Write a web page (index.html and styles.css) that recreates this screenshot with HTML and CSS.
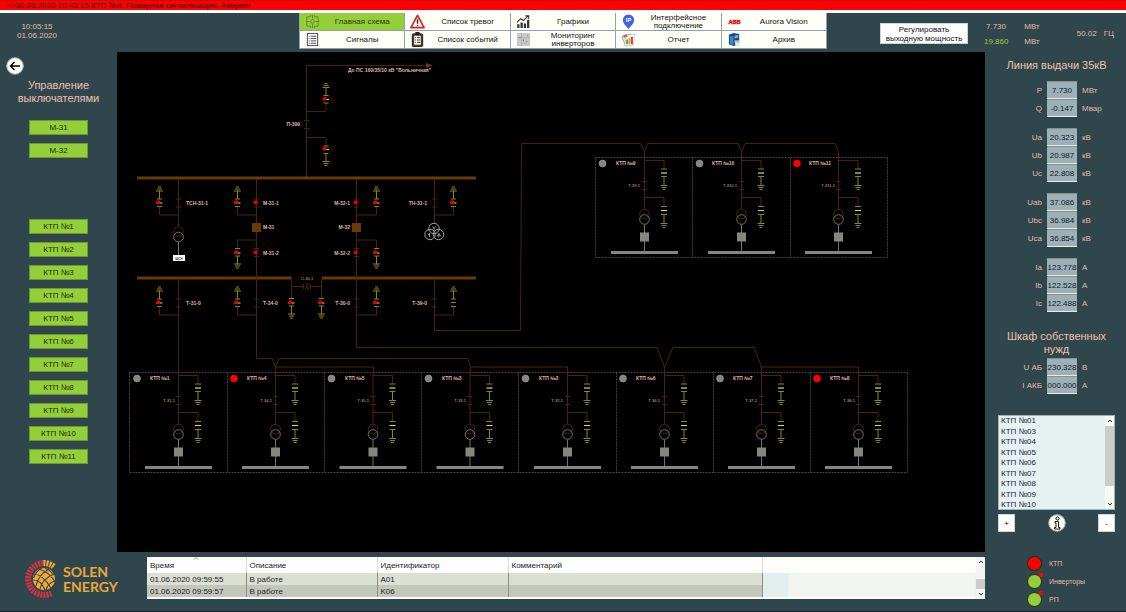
FILE: index.html
```html
<!DOCTYPE html>
<html lang="ru">
<head>
<meta charset="utf-8">
<title>Solen Energy</title>
<link rel="stylesheet" href="styles.css">
</head>
<body>
<div class="app">
  <div class="alarm" role="alert">&gt;&gt;30.05.2020 20:43:15 КТП №4. Пожарная сигнализация. Авария!</div>

  <header class="top">
    <div class="clock"><time>10:05:15</time><time>01.06.2020</time></div>
    <nav class="nav">
      <button class="nav-item active"><svg class="icon" viewBox="0 0 16 16"><path d="M1 8h4M11 8h4M8 1v4M8 11v4M2 3h4v-2M14 3h-4v-2M2 13h4v2M14 13h-4v2M2 3v10M14 3v10" fill="none" stroke="#5d8a2c"/><circle cx="8" cy="8" r="2" fill="#94cf3a" stroke="#5d8a2c"/></svg><span>Главная схема</span></button>
      <button class="nav-item"><svg class="icon" viewBox="0 0 16 16"><path d="M8 1.500L15 14.500H1Z" fill="#fff" stroke="#e0201c" stroke-width="1.800" stroke-linejoin="round"/><path d="M8 5.500v5M8 11.500v1.500" stroke="#222" stroke-width="1.500"/></svg><span>Список тревог</span></button>
      <button class="nav-item"><svg class="icon" viewBox="0 0 16 16"><path d="M2.500 11v4M6 9v6M9.500 10v5M13 6v9" stroke="#333" stroke-width="2.400"/><path d="M1 9l4-4 3 2 5-5M10 2h3.500v3" fill="none" stroke="#333" stroke-width="1.200"/></svg><span>Графики</span></button>
      <button class="nav-item"><svg class="icon" viewBox="0 0 16 16"><path d="M8 16C5 12.500 2 10 2 6.500A6 6 0 0 1 14 6.500C14 10 11 12.500 8 16Z" fill="#3f66dc"/><text x="8" y="9" class="pin-text">IP</text></svg><span>Интерфейсное подключение</span></button>
      <button class="nav-item"><svg class="icon" viewBox="0 0 16 16"><text x="8" y="11" class="abb-text">ABB</text></svg><span>Aurora Vision</span></button>
      <button class="nav-item"><svg class="icon" viewBox="0 0 16 16"><rect x="2.500" y="1.500" width="11" height="13" fill="#fff" stroke="#444"/><path d="M6 4.500h6M6 7h6M6 9.500h6M6 12h6" stroke="#444"/><path d="M4 4.500h1M4 7h1M4 9.500h1M4 12h1" stroke="#444"/></svg><span>Сигналы</span></button>
      <button class="nav-item"><svg class="icon" viewBox="0 0 16 16"><rect x="2.500" y="2" width="11" height="13.500" rx="1" fill="#5a3a1c" stroke="#1c1410"/><rect x="4.500" y="4" width="7" height="9.500" fill="#fff"/><rect x="5.500" y="0" width="5" height="3.500" rx="1" fill="#222"/><path d="M5.500 6h1M7.500 6h3.500M5.500 8.500h1M7.500 8.500h3.500M5.500 11h1M7.500 11h3.500" stroke="#222"/></svg><span>Список событий</span></button>
      <button class="nav-item"><svg class="icon" viewBox="0 0 16 16"><rect x="1" y="1" width="14" height="14" fill="#c8c8c8"/><path d="M1 6h14M6 1v14" stroke="#b4b4b4"/><path d="M3 6h2M8 8v2M11 10h1M9 12h1M12 4h1" stroke="#777"/></svg><span>Мониторинг инверторов</span></button>
      <button class="nav-item"><svg class="icon" viewBox="0 0 16 16"><path d="M1 5l9-3 3 10-8 3z" fill="#e8eef4" stroke="#9ab"/><path d="M5 4l10-2-2 12-9 1z" fill="#f6f8fa" stroke="#aab4bc" stroke-width=".6"/><path d="M2 4l4-2 1 3-4 1z" fill="#e2574c"/><path d="M6.500 8v5" stroke="#4ba64b" stroke-width="2"/><path d="M9 6.500v6.500" stroke="#f0a020" stroke-width="2"/><path d="M11.700 5v8" stroke="#e0402c" stroke-width="2"/></svg><span>Отчет</span></button>
      <button class="nav-item"><svg class="icon" viewBox="0 0 16 16"><path d="M2 3l5-2 6 1v11l-6 2-5-2z" fill="#174a7c"/><path d="M3 4l4 1v9l-4-1.500z" fill="#3e86c4"/><path d="M8 4l4-1v3l-4 1z" fill="#68b0e4"/><path d="M8 9h6v5l-5 1z" fill="#dce8f0"/><path d="M9 10.500h4" stroke="#e8a33a"/></svg><span>Архив</span></button>
    </nav>
    <div class="summary">
      <button class="regulate">Регулировать выходную мощность</button>
      <dl class="power"><dt>7.730</dt><dd>МВт</dd><dt class="green">19.860</dt><dd>МВт</dd></dl>
      <div class="freq"><span>50.02</span><span>ГЦ</span></div>
    </div>
  </header>

  <aside class="left">
    <button class="back" aria-label="Назад"><svg viewBox="0 0 18 18"><circle cx="9" cy="9" r="8.300" fill="#fffff6" stroke="#9fb0b3"/><path d="M14 9H4.500M8.500 5L4.500 9l4 4" fill="none" stroke="#000" stroke-width="1.400"/></svg></button>
    <h2>Управление выключателями</h2>
    <div class="switches">
      <button class="green-btn">М-31</button><button class="green-btn">М-32</button>
    </div>
    <div class="stations">
      <button class="green-btn">КТП №1</button><button class="green-btn">КТП №2</button><button class="green-btn">КТП №3</button><button class="green-btn">КТП №4</button><button class="green-btn">КТП №5</button><button class="green-btn">КТП №6</button><button class="green-btn">КТП №7</button><button class="green-btn">КТП №8</button><button class="green-btn">КТП №9</button><button class="green-btn">КТП №10</button><button class="green-btn">КТП №11</button>
    </div>
  </aside>

  <main class="scheme">
    <svg viewBox="117 52 868 500" role="img" aria-label="Главная схема">
      <defs>
        <g id="gnd">
          <path d="M0 4V12.500" class="wire"/>
          <path d="M0-12V-3.500M-3.500-11.500H3.500M-2.500-13.500H2.500M-1.500-15.500H1.500M-2.500-3.500H2.500M-2.500 4H2.500" class="yellow"/>
        </g>
        <g id="knife"><path d="M0 .5H3" class="bright"/><path d="M-3.500 1.500V-.5L-2-2H.5V1.500Z" class="red"/></g>
        <path id="tick" d="M-2.500-4H2.500M-2.500 4H2.500" class="wire"/>
        <g id="cell">
          <path d="M0 0V51.500M0 3H19.500V11.500M0 40H19.500V49M-2.500 24H2.500M-2.500 32H2.500" class="wire"/>
          <circle cx="0" cy="56.500" r="4.800" class="wire"/>
          <circle cx="0" cy="62" r="4.800" class="gray"/>
          <path d="M0 67V94" class="gray"/>
          <rect x="-4.500" y="75" width="9" height="9" class="gray-fill"/>
          <rect x="-33.500" y="93.500" width="67" height="3" class="gray-fill"/>
          <path d="M16.500 11.500H22.500M16.500 19H22.500M19.500 19V28M16 28H23M17 30H22M18 32H21M16.500 49H22.500M16.500 57H22.500M19.500 57V66M16 66H23M17 68H22M18 70H21" class="yellow"/>
          <path d="M16.500 15.500H22.500" class="yellow thick"/>
          <path d="M16.500 53H22.500" class="bright"/>
        </g>
      </defs>

      <!-- outgoing line -->
      <path d="M306.500 178V65.500H428M306.500 111.500H326M306.500 137.500H326" class="wire"/>
      <path d="M426 63L433 65.500L426 68Z" class="bus"/>
      <use href="#tick" x="306.500" y="124.500"/>
      <use href="#gnd" x="326" y="99"/><use href="#knife" x="326" y="99"/>
      <use href="#gnd" transform="translate(326 150) scale(1 -1)"/><use href="#knife" x="326" y="149"/>
      <text x="348" y="72">До ПС 160/35/10 кВ "Больничная"</text>
      <text x="300" y="126" class="end">П-399</text>

      <!-- bus bars -->
      <path d="M137 176.500H476V179.500H137ZM137 276.500H291.500V279.500H137ZM322 276.500H476V279.500H322Z" class="bus"/>

      <!-- feeders -->
      <path d="M178.500 179V226M256.500 179V358.500H272L275.500 367L279 358.500H467.500L470.500 367H567.500V373M275.500 373V367H373.500V373M470.500 367V373" class="wire"/>
      <path d="M356.500 179V347.500H657L664.500 367L673 347.500H754L761.500 367H858.500V373M664.500 367V373M761.500 367V373" class="wire"/>
      <path d="M434.500 179V223M434.500 279V330.500H520.500L521.500 143.500H640.500L644.500 152L647.500 143.500H738L741.500 152L745 143.500H835L838.500 152V158M644.500 152V158M741.500 152V158M178.500 279V373" class="wire"/>
      <path d="M159.500 215H178.500M237.500 215H256.500M356.500 215H376.500M434.500 215H453.500M237.500 240H256.500M356.500 240H376.500M159.500 315H178.500M237.500 315H256.500M356.500 315H376.500M434.500 315H453.500" class="wire"/>
      <path d="M291.500 279V290M321.500 279V290M291.500 286.500H303.500M310.500 286.500H321.500M303.500 284V289M310.500 284V289M306 283V290M308 283V290" class="wire"/>

      <use href="#gnd" x="159.500" y="202.500"/><use href="#gnd" x="237.500" y="202.500"/><use href="#gnd" x="376.500" y="202.500"/><use href="#gnd" x="453.500" y="202.500"/>
      <use href="#gnd" x="159.500" y="302.500"/><use href="#gnd" x="237.500" y="302.500"/><use href="#gnd" x="376.500" y="302.500"/><use href="#gnd" x="453.500" y="302.500"/>
      <use href="#gnd" transform="translate(237.500 252.500) scale(1 -1)"/><use href="#gnd" transform="translate(376.500 252.500) scale(1 -1)"/>
      <use href="#gnd" transform="translate(291.500 302.500) scale(1 -1)"/><use href="#gnd" transform="translate(321.500 302.500) scale(1 -1)"/>
      <use href="#knife" x="159.500" y="202.500"/><use href="#knife" x="237.500" y="202.500"/><use href="#knife" x="376.500" y="202.500"/><use href="#knife" x="453.500" y="202.500"/>
      <use href="#knife" x="237.500" y="252.500"/><use href="#knife" x="376.500" y="252.500"/>
      <use href="#knife" x="159.500" y="302.500"/><use href="#knife" x="237.500" y="302.500"/><use href="#knife" x="376.500" y="302.500"/><use href="#knife" x="291.500" y="302.500"/><use href="#knife" x="321.500" y="302.500"/>
      <path d="M451 302.500H456" class="yellow"/>
      <use href="#tick" x="178.500" y="203"/><use href="#tick" x="256.500" y="203"/><use href="#tick" x="356.500" y="203"/><use href="#tick" x="434.500" y="203"/>
      <use href="#tick" x="256.500" y="252.500"/><use href="#tick" x="356.500" y="252.500"/>
      <use href="#tick" x="178.500" y="303"/><use href="#tick" x="256.500" y="303"/><use href="#tick" x="356.500" y="303"/><use href="#tick" x="434.500" y="303"/>
      <path d="M253.500 204V202L255 200.500H257.500V204ZM353.500 204V202L355 200.500H357.500V204ZM253.500 254V252L255 250.500H257.500V254ZM353.500 254V252L355 250.500H357.500V254Z" class="red"/>
      <path d="M252 223H261V232H252ZM352 223H361V232H352Z" class="bus"/>

      <!-- auxiliary and voltage transformers -->
      <circle cx="178.500" cy="231.500" r="4.800" class="wire"/><circle cx="178.500" cy="237" r="4.800" class="gray"/>
      <path d="M178.500 242V255" class="gray"/><rect x="173" y="255" width="12" height="6" fill="#fff"/>
      <text x="179" y="260" class="aux">ЩСН</text>
      <g class="vt"><circle cx="434" cy="228.500" r="5.200"/><circle cx="430" cy="234.500" r="5.200"/><circle cx="438.500" cy="234.500" r="5.200"/><path d="M432.500 226.500L434 228.500L435.500 226.500M434 228.500V230.500M428 234L429.500 235M429.500 233V237M437.500 236H440.500L439 233.500Z"/></g>

      <text x="186" y="205">ТСН-31-1</text><text x="263" y="205">М-31-1</text><text x="350" y="205" class="end">М-32-1</text><text x="427" y="205" class="end">ТН-31-1</text>
      <text x="263" y="229">М-31</text><text x="350" y="229" class="end">М-32</text>
      <text x="263" y="255">М-31-2</text><text x="350" y="255" class="end">М-32-2</text>
      <text x="186" y="305">Т-31-0</text><text x="263" y="305">Т-34-0</text><text x="350" y="305" class="end">Т-30-0</text><text x="427" y="305" class="end">Т-39-0</text>
      <text x="301" y="280" class="small">С-30-1</text>

      <!-- upper transformer stations -->
      <path d="M595.500 157.500H887.500M595.500 257.500H887.500M595.500 157.500V257.500M692.500 157.500V257.500M790.500 157.500V257.500M887.500 157.500V257.500" class="frame"/>
      <use href="#cell" x="644.500" y="157.500"/><use href="#cell" x="741.500" y="157.500"/><use href="#cell" x="838.500" y="157.500"/>
      <circle cx="602.500" cy="163.500" r="3.500" class="lamp"/><circle cx="699.500" cy="163.500" r="3.500" class="lamp"/><circle cx="797" cy="163.500" r="3.500" class="lamp alarm-lamp"/>
      <text x="616" y="165">КТП №9</text><text x="712" y="165">КТП №10</text><text x="809" y="165">КТП №11</text>
      <text x="640" y="187" class="small end">Т-39-1</text><text x="737" y="187" class="small end">Т-310-1</text><text x="835" y="187" class="small end">Т-311-1</text>

      <!-- lower transformer stations -->
      <path d="M129.500 372.500H907.500M129.500 472.500H907.500M129.500 372.500V472.500M227.500 372.500V472.500M324.500 372.500V472.500M421.500 372.500V472.500M518.500 372.500V472.500M616.500 372.500V472.500M713.500 372.500V472.500M810.500 372.500V472.500M907.500 372.500V472.500" class="frame"/>
      <use href="#cell" x="178.500" y="372.500"/><use href="#cell" x="275.500" y="372.500"/><use href="#cell" x="373" y="372.500"/><use href="#cell" x="470" y="372.500"/><use href="#cell" x="567.500" y="372.500"/><use href="#cell" x="664.500" y="372.500"/><use href="#cell" x="761.500" y="372.500"/><use href="#cell" x="858.500" y="372.500"/>
      <circle cx="137" cy="378.500" r="3.500" class="lamp"/><circle cx="234" cy="378.500" r="3.500" class="lamp alarm-lamp"/><circle cx="331.500" cy="378.500" r="3.500" class="lamp"/><circle cx="428.500" cy="378.500" r="3.500" class="lamp"/><circle cx="525.500" cy="378.500" r="3.500" class="lamp"/><circle cx="623" cy="378.500" r="3.500" class="lamp"/><circle cx="720" cy="378.500" r="3.500" class="lamp"/><circle cx="817" cy="378.500" r="3.500" class="lamp alarm-lamp"/>
      <text x="150" y="380">КТП №1</text><text x="247" y="380">КТП №4</text><text x="345" y="380">КТП №5</text><text x="442" y="380">КТП №3</text><text x="539" y="380">КТП №2</text><text x="636" y="380">КТП №6</text><text x="733" y="380">КТП №7</text><text x="830" y="380">КТП №8</text>
      <text x="175" y="402" class="small end">Т-31-1</text><text x="272" y="402" class="small end">Т-34-1</text><text x="369" y="402" class="small end">Т-35-1</text><text x="466" y="402" class="small end">Т-33-1</text><text x="563" y="402" class="small end">Т-32-1</text><text x="660" y="402" class="small end">Т-36-1</text><text x="757" y="402" class="small end">Т-37-1</text><text x="855" y="402" class="small end">Т-38-1</text>
    </svg>
  </main>

  <aside class="right">
    <h2>Линия выдачи 35кВ</h2>
    <div class="readings">
      <div class="group">
        <label for="p">P</label><input id="p" value="7.730" readonly><span>МВт</span>
        <label for="q">Q</label><input id="q" value="-0.147" readonly><span>Мвар</span>
      </div>
      <div class="group">
        <label for="ua">Ua</label><input id="ua" value="20.323" readonly><span>кВ</span>
        <label for="ub">Ub</label><input id="ub" value="20.987" readonly><span>кВ</span>
        <label for="uc">Uc</label><input id="uc" value="22.808" readonly><span>кВ</span>
      </div>
      <div class="group">
        <label for="uab">Uab</label><input id="uab" value="37.086" readonly><span>кВ</span>
        <label for="ubc">Ubc</label><input id="ubc" value="36.984" readonly><span>кВ</span>
        <label for="uca">Uca</label><input id="uca" value="36.854" readonly><span>кВ</span>
      </div>
      <div class="group">
        <label for="ia">Ia</label><input id="ia" value="123.778" readonly><span>А</span>
        <label for="ib">Ib</label><input id="ib" value="122.528" readonly><span>А</span>
        <label for="ic">Ic</label><input id="ic" value="122.488" readonly><span>А</span>
      </div>
    </div>
    <h2 class="second">Шкаф собственных нужд</h2>
    <div class="group">
      <label for="uakb">U АБ</label><input id="uakb" value="230.328" readonly><span>В</span>
      <label for="iakb">I АКБ</label><input id="iakb" value="000.000" readonly><span>А</span>
    </div>
    <div class="list">
      <select size="9" aria-label="Список КТП">
        <option>КТП №01</option><option>КТП №03</option><option>КТП №04</option><option>КТП №05</option><option>КТП №06</option><option>КТП №07</option><option>КТП №08</option><option>КТП №09</option><option>КТП №10</option>
      </select>
      <div class="scroll"><svg viewBox="0 0 8 8"><path d="M2 5l2-2 2 2"/></svg><i class="thumb"></i><svg viewBox="0 0 8 8"><path d="M2 3l2 2 2-2"/></svg></div>
    </div>
    <div class="list-actions">
      <button class="square">+</button>
      <button class="info" aria-label="Информация"><svg viewBox="0 0 18 18"><circle cx="9" cy="9" r="8.300" fill="#fffff6" stroke="#9fb0b3"/><circle cx="9.500" cy="4.500" r="1.600" fill="#fff" stroke="#000"/><path d="M7 7.500h3.500v6H12v1.500H6.500v-1.500H8v-4.500H7z" fill="#fff" stroke="#000" stroke-width=".9"/></svg></button>
      <button class="square">-</button>
    </div>
  </aside>

  <footer class="bottom">
    <div class="logo">
      <svg viewBox="0 0 32 40">
        <path d="M18 4A16 16 0 1 0 27 33.900" class="rays-red"/>
        <path d="M18.500 4A16 16 0 0 1 29 7.600" class="rays-gold"/>
        <circle cx="19" cy="20" r="11" fill="#f3a735"/>
        <path d="M9 15Q17 15 26 29M8.500 21Q16 21 20 31M14 10Q24 13 29.500 22M20 9Q25 11 29 16M24 10Q13 16 11 27M29 15Q17 20 15 30M30 22Q23 24 21 31M17 9Q11 12 8.500 19" fill="none" stroke="#33484e" stroke-width="1.100"/>
      </svg>
      <strong><span>SOLEN</span><span>ENERGY</span></strong>
    </div>
    <div class="events">
      <table>
        <colgroup><col class="c-time"><col class="c-desc"><col class="c-id"><col class="c-note"><col></colgroup>
        <thead><tr><th class="sorted">Время<svg viewBox="0 0 6 3"><path d="M1 2.500L3 .5l2 2"/></svg></th><th>Описание</th><th>Идентификатор</th><th>Комментарий</th><th></th></tr></thead>
        <tbody>
          <tr><td>01.06.2020 09:59:55</td><td>В работе</td><td>A01</td><td></td><td class="blank"></td></tr>
          <tr><td>01.06.2020 09:59:57</td><td>В работе</td><td>K06</td><td></td><td class="blank"></td></tr>
        </tbody>
      </table>
      <div class="scroll"><svg viewBox="0 0 8 8"><path d="M2 5l2-2 2 2"/></svg><i class="thumb"></i><svg viewBox="0 0 8 8"><path d="M2 3l2 2 2-2"/></svg></div>
    </div>
    <ul class="status">
      <li><i class="led bad"></i>КТП</li>
      <li><i class="led flag"></i>Инверторы</li>
      <li><i class="led flag"></i>РП</li>
    </ul>
  </footer>
</div>
</body>
</html>
```
FILE: styles.css
```css
* { box-sizing: border-box; }
body {
  margin: 0;
  background: #30464d;
  color: #e6b8a6;
  font: 8px/9px "Liberation Sans", Arial, sans-serif;
}
button, input, select { font: inherit; margin: 0; padding: 0; border-radius: 0; }
button { cursor: pointer; }
h2 { margin: 0; font-size: 11px; line-height: 13px; font-weight: 400; text-align: center; color: #f0c0ac; }

.app {
  display: grid;
  grid-template-columns: 117px minmax(0, 1fr) 141px;
  min-height: 100vh;
  grid-template-rows: auto auto auto 1fr;
}
.alarm {
  grid-column: 1 / -1;
  background: #fe0000;
  border-top: 1px solid #c01010;
  border-bottom: 3px solid #fff;
  color: #3c0000;
  padding: 0 6px;
  height: 13px;
  line-height: 9px;
}

.top {
  grid-column: 1 / -1;
  display: grid;
  grid-template-columns: minmax(0, 1fr) minmax(0, 528px) minmax(0, 1fr);
  height: 39px;
}
.clock { width: 74px; padding-top: 9px; text-align: center; }
.clock time { display: block; }
.nav {
  display: grid;
  grid-template-columns: repeat(5, 1fr);
  grid-auto-rows: 17px;
  gap: 1px;
  align-self: start;
  background: #8fa3ab;
  border: 1px solid #8fa3ab;
  border-top: 0;
}
.nav-item {
  display: flex;
  align-items: center;
  min-width: 0;
  border: 0;
  padding: 0 0 0 5px;
  background: #fffff8;
  color: #111;
  line-height: 8px;
  overflow: hidden;
}
.nav-item span { flex: 1; padding: 0 6px; }
.nav-item.active { background: #94cf3a; color: #26360c; }
.icon { width: 15px; height: 15px; flex: none; }
.pin-text { font: bold 6px "Liberation Sans", sans-serif; fill: #fff; text-anchor: middle; }
.abb-text { font: bold 6px "Liberation Sans", sans-serif; fill: #e0141c; stroke: #e0141c; stroke-width: .5px; text-anchor: middle; }

.summary { display: flex; padding: 0 12px 0 53px; align-items: flex-start; }
.regulate { width: 88px; height: 21px; margin-top: 10px; border: 1px solid #cdd5d7; background: #fff; color: #111; }
.power { display: grid; grid-template-columns: 24px 20px; column-gap: 14px; row-gap: 6px; margin: 9px auto 0 16px; text-align: center; }
.power dt, .power dd { margin: 0; }
.power .green { color: #9acb3c; }
.freq { display: flex; gap: 7px; padding-top: 16px; }

.left { padding: 5px 0 0; }
.back, .info { display: block; width: 18px; height: 18px; border: 0; background: none; }
.back { margin-left: 6px; }
.back svg, .info svg { display: block; width: 18px; height: 18px; }
.left h2 { margin-top: 4px; padding: 0 8px; }
.switches, .stations { display: flex; flex-direction: column; align-items: center; gap: 8px; margin-top: 15px; }
.stations { margin-top: 61px; }
.green-btn { width: 59px; height: 15px; border: 1px solid #6c9a2c; background: #94cf3a; color: #1c2a08; }

.scheme { background: #000; }
.scheme svg { display: block; width: 100%; }
.scheme text { font: bold 5px "Liberation Sans", Arial, sans-serif; fill: #dfb3a3; }
.scheme .small { font-size: 4px; font-weight: 400; }
.scheme .end { text-anchor: end; }
.scheme .aux { font-size: 3px; fill: #333; text-anchor: middle; }
.wire { fill: none; stroke: #4a2600; }
.bus { fill: #6a3a06; }
.gray { fill: none; stroke: #6f736a; }
.gray-fill { fill: #84877c; }
.yellow { fill: none; stroke: #8c8614; }
.yellow.thick { stroke-width: 2px; }
.bright { fill: none; stroke: #e8e02c; }
.red { fill: #e80000; }
.vt { fill: none; stroke: #c8c8bc; stroke-width: .8px; }
.frame { fill: none; stroke: #6e4850; stroke-width: .8px; stroke-dasharray: 2 1; }
.lamp { fill: #84877c; stroke: #a8aaa0; stroke-width: .5px; }
.alarm-lamp { fill: #fe0000; stroke: #fe0000; }

.right { padding: 7px 11px 0 13px; }
.readings { display: grid; gap: 11px; margin-top: 9px; }
.group { display: grid; grid-template-columns: 44px 30px 1fr; column-gap: 5px; grid-auto-rows: 18px; align-items: center; }
.group label { text-align: right; }
.group input {
  width: 100%;
  height: 18px;
  border: 1px solid #8c8d80;
  border-bottom-color: #e8ece6;
  border-left: 0;
  border-right: 0;
  background: #9bb0b8;
  color: #15191a;
  text-align: center;
}
.second { margin: 18px 0 2px; }
.list { display: flex; height: 95px; margin-top: 21px; border: 1px solid #a8b4b4; background: #e6f2f2; }
.list select {
  flex: 1;
  min-width: 0;
  appearance: none;
  border: 0;
  outline: 0;
  background: none;
  color: #1a1a3c;
  overflow: hidden;
}
.list option { padding: 0 2px 1px; min-height: 0; }
.list option:nth-child(even) { padding: 1px 2px; }
.scroll { display: flex; flex-direction: column; align-items: center; width: 9px; background: #f6faf4; }
.scroll svg { width: 8px; height: 10px; flex: none; fill: none; stroke: #222; }
.scroll .thumb { width: 100%; height: 60px; background: #cbcdc8; }
.scroll svg:last-child { margin-top: auto; }
.list-actions { display: flex; justify-content: space-between; margin-top: 4px; }
.square { width: 17px; height: 18px; border: 1px solid #cdd5d7; background: #fff; color: #000; }

.bottom {
  grid-column: 1 / -1;
  display: grid;
  grid-template-columns: 147px minmax(0, 1fr) 141px;
  border-bottom: 1px solid #17252c;
}
.logo { display: flex; align-items: center; align-self: start; gap: 6px; padding: 7px 0 0 25px; }
.logo svg { width: 32px; height: 40px; flex: none; }
.logo strong { font: bold 14px/15px "Open Sans", Lato, sans-serif; font-family: Lato, "Open Sans", sans-serif; color: #eaa636; }
.logo strong span { display: block; height: 15px; overflow: hidden; }
.rays-red { fill: none; stroke: #d8313f; stroke-width: 6px; stroke-dasharray: 2 1; }
.rays-gold { fill: none; stroke: #f3a735; stroke-width: 6px; stroke-dasharray: 2 1; }
.events { display: flex; height: 42px; margin-top: 5px; background: #fdfefb; overflow: hidden; }
.events table { flex: 1; align-self: flex-start; min-width: 0; width: 100%; border-collapse: collapse; table-layout: fixed; color: #1d1d1d; }
.c-time { width: 99px; }
.c-desc, .c-id { width: 131px; }
.c-note { width: 254px; }
.events th { position: relative; height: 16px; padding: 0 3px; text-align: left; font-weight: 400; border-right: 1px solid #d6dcd6; }
.events th:last-child { border: 0; }
.events td { height: 12px; padding: 0 3px; background: #dbdfd4; border-right: 1px solid #8b8f88; }
.events tr:nth-child(2) td { background: #c3c6bb; }
.events tr td.blank { background: linear-gradient(90deg, #e4eeee 12%, #f2f4f0 12%); border: 0; }
.sorted svg { position: absolute; left: 46px; top: 0; width: 6px; height: 3px; fill: none; stroke: #777; stroke-width: .8px; }
.events .scroll .thumb { height: 10px; margin-top: 12px; }
.events .scroll { background: #f2f4f0; }
.status { margin: 0; padding: 2px 0 0 42px; list-style: none; font-size: 7px; }
.status li { display: flex; align-items: center; gap: 7px; height: 18px; }
.led { position: relative; width: 15px; height: 15px; border: 1px solid #1c2c18; border-radius: 50%; background: #94cf3a; }
.led.bad { background: #fe0000; }
.flag::after { content: ""; position: absolute; right: -2px; top: -2px; width: 4px; height: 4px; background: #fe0000; }
```
